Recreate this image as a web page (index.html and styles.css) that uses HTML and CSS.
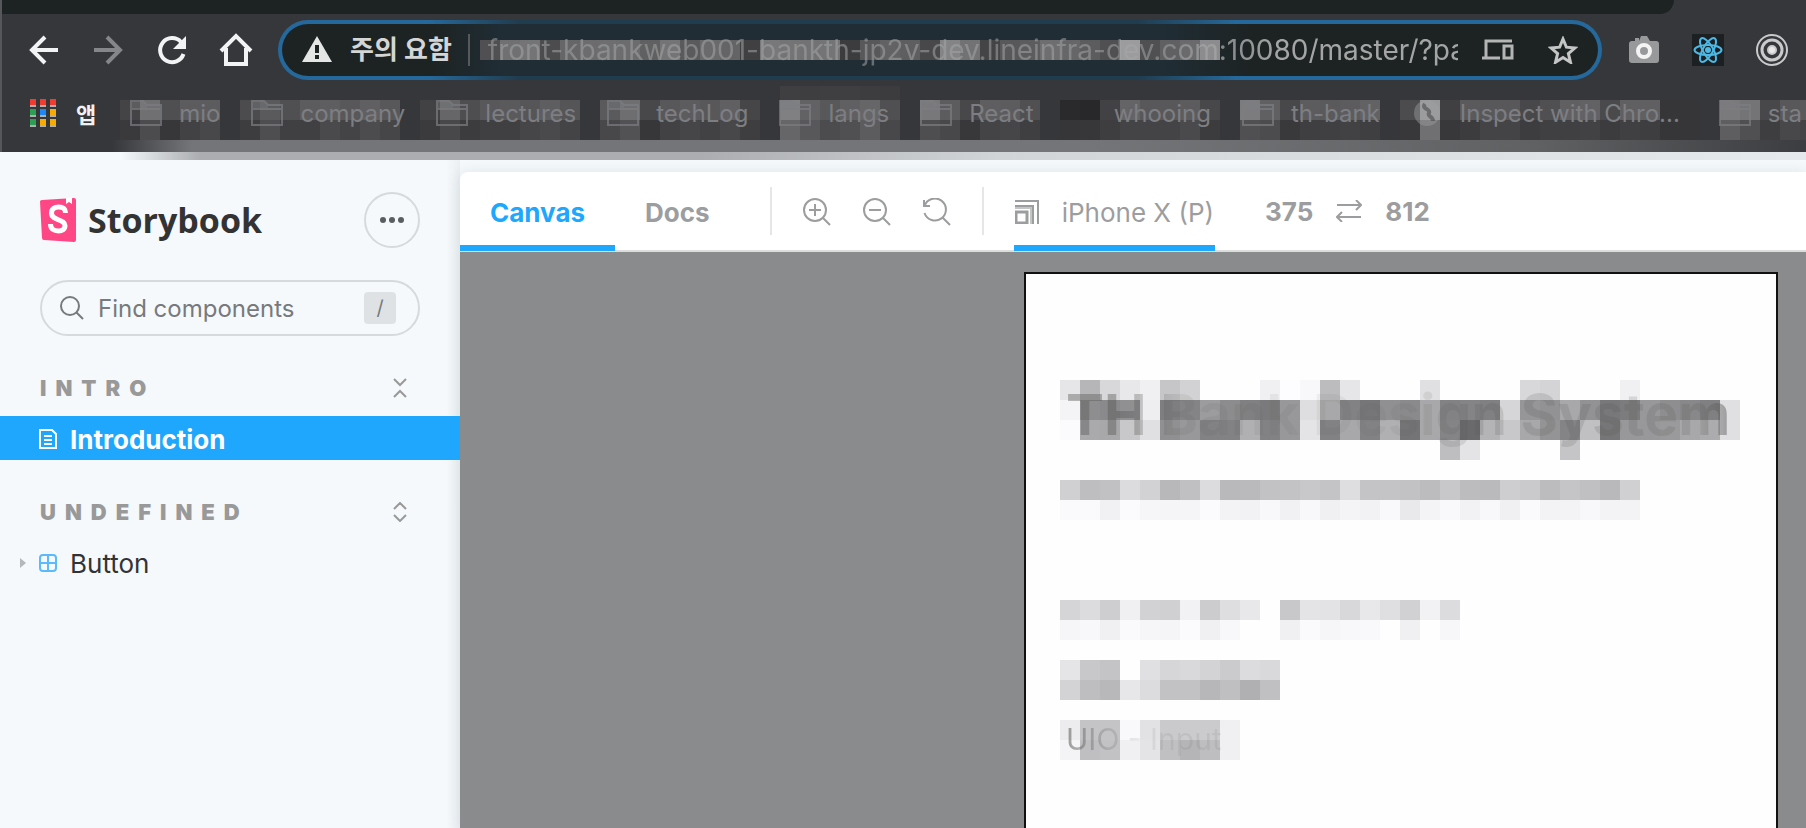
FILE: index.html
```html
<!DOCTYPE html>
<html lang="ko">
<head>
<meta charset="utf-8">
<title>Storybook</title>
<link rel="stylesheet" href="styles.css">
</head>
<body>
<svg class="defs" aria-hidden="true">
  <symbol id="folder" viewBox="0 0 32 26"><path d="M1 25V1h12l4 4h14v20zM1 9h30" fill="none" stroke="currentColor" stroke-width="2"/><path d="M1 1h12l4 4v4H1z" fill="currentColor" opacity=".6"/></symbol>
</svg>
<header class="browser">
  <div class="tabstrip"></div>
  <div class="navbar">
    <button class="nav" aria-label="Back"><svg width="32" height="32" viewBox="0 0 32 32" fill="none" stroke="#f2f3f4" stroke-width="4"><path d="M30 16H5M17 3L4 16l13 13"/></svg></button>
    <button class="nav" aria-label="Forward"><svg width="32" height="32" viewBox="0 0 32 32" fill="none" stroke="#85868a" stroke-width="4"><path d="M2 16h25M15 3l13 13-13 13"/></svg></button>
    <button class="nav" aria-label="Reload"><svg width="32" height="32" viewBox="0 0 32 32" fill="none" stroke="#f2f3f4" stroke-width="4"><path d="M27.500 20A12 12 0 1 1 25 8"/><path d="M30 2v13H17z" fill="#f2f3f4" stroke="none"/></svg></button>
    <button class="nav" aria-label="Home"><svg width="34" height="34" viewBox="0 0 34 34" fill="none" stroke="#f2f3f4" stroke-width="4"><path d="M2 18L17 3l15 15M7 15v16h20V15"/></svg></button>
    <div class="omnibox">
      <svg class="url-mosaic" data-rows="50 70 74 4c 66 6c 6e 6c 60 74 5a 6a 64 40 78 74 72 74 3c 58 62 5e 48 84 72 44 58 5c 6e 66 5c 50 9c 50 60 6a 8c"></svg>
      <svg class="warn" width="30" height="26" viewBox="0 0 30 26"><path d="M15 0l15 26H0z" fill="#e4e6e6"/><path d="M15 9v8M15 19v4" stroke="#1d2323" stroke-width="4"/></svg>
      <span class="secure">주의 요함</span>
      <input class="url" aria-label="URL" value="front-kbankweb001-bankth-jp2v-dev.lineinfra-dev.com:10080/master/?path">
      <svg width="32" height="22" viewBox="0 0 32 22" fill="none" stroke="#b4b6b6" stroke-width="3"><path d="M4 18V2h26M0 19h18M22 7h8v12h-8z"/></svg>
      <svg class="star" width="30" height="28" viewBox="0 0 30 28" fill="none" stroke="#c4c6c6" stroke-width="3"><path d="M15 3l3.400 8.200 8.600.7-6.600 5.700 2.100 8.700L15 21.600l-7.500 4.700 2.100-8.700L3 11.900l8.600-.7z"/></svg>
    </div>
    <button class="ext" aria-label="Capture"><svg width="32" height="28" viewBox="0 0 32 28"><path d="M4 5h3V2h4v3l2-5h6l3 5h6a3 3 0 0 1 3 3v16a3 3 0 0 1-3 3H4a3 3 0 0 1-3-3V8a3 3 0 0 1 3-3z" fill="#98999b"/><circle cx="16" cy="15" r="6" fill="#98999b" stroke="#f4f4f4" stroke-width="4"/></svg></button>
    <button class="ext" aria-label="React"><svg width="32" height="32" viewBox="0 0 32 32"><path d="M0 0h32v32H0z" fill="#1d2022"/><g fill="none" stroke="#4db9e6" stroke-width="2"><ellipse cx="16" cy="16" rx="13.500" ry="5"/><ellipse cx="16" cy="16" rx="13.500" ry="5" transform="rotate(60 16 16)"/><ellipse cx="16" cy="16" rx="13.500" ry="5" transform="rotate(120 16 16)"/></g><circle cx="16" cy="16" r="3" fill="#4db9e6"/></svg></button>
    <button class="ext" aria-label="Record"><svg width="32" height="32" viewBox="0 0 32 32" fill="none" stroke="#c9cacb" stroke-width="2"><circle cx="16" cy="16" r="15"/><circle cx="16" cy="16" r="10" stroke-width="3"/><circle cx="16" cy="16" r="4" fill="#e8e8e8"/></svg></button>
  </div>
  <nav class="bookmarks">
    <svg class="bm-mosaic" data-rows=".................................................................. 3f 3e 3f 3f 3d 3c/44 70 4f 5c 5c .. 4c 5a 50 5c 5e 58 60 58 .. 42 66 4e 58 5a 56 5e 55 .. 5a 6e 48 58 5c 58 60 46 .. 80 62 58 60 66 50 .. 78 5c 48 5e 5c 50 .. 2a 28 42 64 58 58 5c 48 .. 7c 60 48 5c 5a 5c 62 .. 4c 98 40 5a 58 58 48 50 60 62 4a 60 60 36 36 .. 7a 74 48 58 5a/3a 4c 37 42 48 .. 3d 4e 40 40 4a 44 4c 46 .. 3b 48 3c 40 40 46 4a 44 .. 48 52 37 42 46 42 48 3e .. 66 58 4c 50 5c 48 .. 4e 48 38 44 46 3f .. 36 37 3e 44 44 44 4a 3c .. 50 4c 39 3f 40 42 3f .. 38 70 38 3c 44 44 3d 40 40 42 3c 40 3e 36 36 .. 5e 50 3e 48 44"></svg>
    <a class="bm apps" href="#"><svg width="26" height="28" viewBox="0 0 26 28"><g fill="#aeb0b1"><path d="M0 6h6v2H0zM10 6h6v2h-6zM20 6h6v2h-6zM0 16h6v2H0zM10 16h6v2h-6zM20 16h6v2h-6zM0 26h6v2H0zM10 26h6v2h-6zM20 26h6v2h-6z"/></g><path d="M0 0h6v6H0zM10 0h6v6h-6zM20 0h6v6h-6z" fill="#f23b30"/><path d="M0 10h6v6H0zM0 20h6v6H0z" fill="#2f9e55"/><path d="M10 10h6v6h-6z" fill="#1e86f5"/><path d="M20 10h6v6h-6zM10 20h6v6h-6zM20 20h6v6h-6z" fill="#f7ab05"/></svg><b>앱</b></a>
    <a class="bm" href="#"><svg width="32" height="26"><use href="#folder"/></svg>mio</a>
    <a class="bm" href="#"><svg width="32" height="26"><use href="#folder"/></svg>company</a>
    <a class="bm" href="#"><svg width="32" height="26"><use href="#folder"/></svg>lectures</a>
    <a class="bm" href="#"><svg width="32" height="26"><use href="#folder"/></svg>techLog</a>
    <a class="bm" href="#"><svg width="32" height="26"><use href="#folder"/></svg>langs</a>
    <a class="bm" href="#"><svg width="32" height="26"><use href="#folder"/></svg>React</a>
    <a class="bm" href="#"><svg width="32" height="26"></svg>whooing</a>
    <a class="bm" href="#"><svg width="32" height="26"><use href="#folder"/></svg>th-bank</a>
    <a class="bm" href="#"><svg width="32" height="26" viewBox="0 0 32 26"><circle cx="16" cy="13" r="13" fill="#a0a1a3" opacity=".6"/><path d="M14 4c-4 5 6 5 4 9s4 3 4 8" fill="none" stroke="#58595c" stroke-width="4"/></svg>Inspect with Chro...</a>
    <a class="bm last" href="#"><svg width="32" height="26"><use href="#folder"/></svg>sta</a>
  </nav>
  <div class="edge"></div>
</header>
<div class="app">
  <aside class="sidebar">
    <div class="brand">
      <svg width="36" height="44" viewBox="0 0 36 44"><path d="M0 3.500Q0 2 2 2L34 0q2 0 2 2v40q0 2-2 2L4 42q-2 0-2-2z" fill="#ff4785"/><path d="M26 0h6v6l-3-2-3 2z" fill="#fff"/><path d="M25.500 15c0-5-3-6-7-6s-7 2-7 6c0 8 13.500 6 13.500 12.500 0 4-3 5.500-6.500 5.500-4.500 0-8-2-8-7" fill="none" stroke="#fff" stroke-width="5"/></svg>
      <span class="wordmark">Storybook</span>
      <button class="more" aria-label="Shortcuts"><svg width="24" height="8" viewBox="0 0 24 8" fill="#5b5e60"><circle cx="3" cy="4" r="3"/><circle cx="12" cy="4" r="3"/><circle cx="21" cy="4" r="3"/></svg></button>
    </div>
    <label class="search">
      <svg width="24" height="24" viewBox="0 0 24 24" fill="none" stroke="#777a7c" stroke-width="2"><circle cx="10" cy="10" r="9"/><path d="M16.500 16.500L23 23"/></svg>
      <input placeholder="Find components" aria-label="Find components">
      <kbd>/</kbd>
    </label>
    <section class="group">
      <h2>INTRO<button aria-label="Collapse"><svg width="14" height="20" viewBox="0 0 14 20" fill="none" stroke="#999" stroke-width="2"><path d="M1 1l6 6 6-6M1 19l6-6 6 6"/></svg></button></h2>
      <a class="item active" href="#"><svg width="18" height="20" viewBox="0 0 18 20" fill="none" stroke="#fff" stroke-width="2"><path d="M1 1h12l4 4v14H1zM5 7h8M5 11h8M5 15h8"/></svg>Introduction</a>
    </section>
    <section class="group">
      <h2>UNDEFINED<button aria-label="Expand"><svg width="14" height="20" viewBox="0 0 14 20" fill="none" stroke="#999" stroke-width="2"><path d="M1 7l6-6 6 6M1 13l6 6 6-6"/></svg></button></h2>
      <a class="item" href="#"><svg class="caret" width="6" height="10" viewBox="0 0 6 10"><path d="M0 0l6 5-6 5z" fill="#b5b8ba"/></svg><svg width="18" height="18" viewBox="0 0 18 18" fill="none" stroke="#5cb9fc" stroke-width="2"><rect x="1" y="1" width="16" height="16" rx="3"/><path d="M9 1v16M1 9h16"/></svg>Button</a>
    </section>
  </aside>
  <main class="panel">
    <div class="toolbar">
      <button class="tab on">Canvas</button>
      <button class="tab docs">Docs</button>
      <span class="rule"></span>
      <div class="zooms">
        <button aria-label="Zoom in"><svg width="28" height="28" viewBox="0 0 28 28"><circle cx="12" cy="12" r="11"/><path d="M20 20l7 7M6 12h12M12 6v12"/></svg></button>
        <button aria-label="Zoom out"><svg width="28" height="28" viewBox="0 0 28 28"><circle cx="12" cy="12" r="11"/><path d="M20 20l7 7M6 12h12"/></svg></button>
        <button aria-label="Reset zoom"><svg width="28" height="28" viewBox="0 0 28 28"><path d="M20 20l7 7M1 2v6h6M1.500 8A11 11 0 1 1 1.500 15"/></svg></button>
      </div>
      <span class="rule"></span>
      <button class="device"><svg width="24" height="24" viewBox="0 0 24 24" fill="none" stroke="#9c9d9e" stroke-width="2"><path d="M0 1h23v23M0 6h18v18" /><path d="M0 8h16v16" stroke="#c4c5c6"/><rect x="1" y="12" width="11" height="11" stroke-width="3"/></svg>iPhone X (P)</button>
      <div class="size"><span>375</span><button aria-label="Rotate"><svg width="26" height="22" viewBox="0 0 26 22"><path d="M1 5h24M20 0l5 5-5 5M25 17H1M6 12l-5 5 5 5"/></svg></button><span>812</span></div>
    </div>
    <div class="canvas">
      <article class="frame">
        <div class="block title"><svg data-rows="e6 b6 d8 e8 f0 c6 d2 .. .. .. f0 fd f8 bc e6 .. .. .. e0 .. .. .. .. d8 d4 .. .. .. f0 .. .. .. .. ../f4 8e 8a 90 ee 7e 84 9c 8c 80 7a 98 de a8 82 76 90 8a a8 82 84 80 d6 96 92 a8 92 78 7c 98 8e 88 80 e0/fb aa a8 c8 e0 90 98 82 82 b0 82 98 e4 82 a8 82 b0 74 a8 84 6a b4 c8 a8 94 84 c0 76 98 98 9a a8 ac e0/.. .. .. .. .. .. .. .. .. .. .. .. .. .. .. .. .. .. .. be e4 .. .. .. .. c5 .. .. .. .. .. .. .. .."></svg><h1>TH Bank Design System</h1></div>
        <div class="block lead"><svg data-rows="d0 be c1 dc d2 b8 c0 dc b9 ba c2 c3 c8 c4 de c4 c4 c2 bc c8 bc ba ce ca bc c5 c0 b9 d0/fa fa f1 fb f6 f5 f5 fb f3 f2 f8 f1 f8 f0 f4 f2 f9 e9 f4 f9 f2 f8 f0 fa f3 f3 f8 f3 f3"></svg></div>
        <div class="block"><svg data-rows="d5 dc ce f0 d2 d0 f2 cc de e8 .. c8 e4 e3 d8 e8 df d1 f2 dc/f6 f8 f0 fa f6 f5 fb f0 f8 .. .. f0 fa f6 f8 f9 .. f0 .. f7"></svg></div>
        <div class="block"><svg data-rows="e5 c8 c4 .. e0 d6 d9 d3 cb dc d9/d3 be b8 e7 dc c2 c2 b7 bf b0 c0"></svg></div>
        <div class="block"><svg data-rows="ec c4 c4 f9 e2 ca cb cb f0/f4 bf c2 f0 e4 c0 b5 be f0"></svg><p>UIO - Input</p></div>
      </article>
    </div>
  </main>
</div>
<script src="mosaic.js"></script>
</body>
</html>
```
FILE: mosaic.js
```js
// Paints each svg[data-rows] as 20px tiles; rows are split by "/", tiles are grey levels in hex.
const TILE = 20;
document.querySelectorAll('svg[data-rows]').forEach(svg => {
  const rows = svg.dataset.rows.split('/').map(r => r.replace(/\s/g, '').match(/../g));
  svg.setAttribute('width', Math.max(...rows.map(r => r.length)) * TILE);
  svg.setAttribute('height', rows.length * TILE);
  svg.setAttribute('shape-rendering', 'crispEdges');
  rows.forEach((row, y) => row.forEach((level, x) => {
    if (level === '..') return;
    const tile = document.createElementNS('http://www.w3.org/2000/svg', 'rect');
    const g = parseInt(level, 16);
    tile.setAttribute('x', x * TILE);
    tile.setAttribute('y', y * TILE);
    tile.setAttribute('width', TILE);
    tile.setAttribute('height', TILE);
    tile.setAttribute('fill', `rgb(${g},${g},${Math.min(g + 2, 255)})`);
    svg.append(tile);
  }));
});
```
FILE: styles.css
```css
* { box-sizing: border-box; }
body {
  margin: 0;
  height: 100vh;
  display: flex;
  flex-direction: column;
  overflow: hidden;
  background: #f5f9fc;
  color: #333;
  font-family: Inter, "Noto Sans CJK KR", sans-serif;
  font-size: 26px;
}
button, input { font: inherit; color: inherit; border: 0; padding: 0; margin: 0; background: none; }
button { display: flex; align-items: center; justify-content: center; }
input { outline: 0; min-width: 0; }
svg { display: block; flex: none; }
a { color: inherit; text-decoration: none; }
.defs { position: absolute; width: 0; height: 0; }

.browser { background: #36373b; border-left: 2px solid #55575a; flex: none; }
.tabstrip { height: 14px; margin-right: 132px; background: #1d2323; border-radius: 0 0 14px 0; }
.navbar { height: 72px; padding: 0 18px 0 26px; display: flex; align-items: center; gap: 32px; }
.nav { width: 32px; height: 32px; }
.omnibox {
  flex: 1;
  min-width: 0;
  height: 60px;
  margin: 0 -6px 0 -6px;
  padding: 0 20px 0 20px;
  display: flex;
  align-items: center;
  position: relative;
  border: 4px solid transparent;
  border-radius: 30px;
  background:
    linear-gradient(90deg, #1d2323 150px, #202d35 220px, #202d35 880px, #1d2323 970px) padding-box,
    linear-gradient(90deg, #25699c 150px, #203d50 240px, #203d50 860px, #25699c 960px) border-box;
}
.url-mosaic { position: absolute; left: 198px; top: 16px; }
.secure { margin-left: 18px; padding-right: 16px; border-right: 2px solid #55595a; font-size: 26px; font-weight: 700; line-height: 32px; color: #d4d6d6; white-space: nowrap; }
.url {
  flex: 1;
  position: relative;
  margin: 0 24px 0 18px;
  color: #a4a6a6;
  font-size: 28px;
  -webkit-mask-image: linear-gradient(90deg, #0008 680px, #000 790px);
  mask-image: linear-gradient(90deg, #0008 680px, #000 790px);
}
.warn { margin-top: -2px; }
.star { margin-left: 34px; }
.ext { width: 32px; height: 32px; }

.bookmarks { height: 54px; padding: 14px 0 14px 28px; display: flex; gap: 31px; position: relative; overflow: hidden; }
.bm-mosaic { position: absolute; left: 118px; top: 0; margin-top: -6px; }
.bm { display: flex; align-items: center; gap: 17px; position: relative; height: 26px; font-size: 24px; white-space: nowrap; color: #7d7e82; }
.bm svg { opacity: .7; }
.bm.apps { gap: 20px; color: #f0f1f2; font-size: 22px; margin-right: 3px; }
.bm.apps svg { opacity: 1; }
.bm.last { margin-left: 8px; }
.edge { height: 12px; background: linear-gradient(90deg, #77797c00 110px, #737578 190px, #737578 60%, #5f6163 85%, #3c3d40 100%); }

.app { flex: 1; min-height: 0; display: flex; }
.app::before { content: ""; position: absolute; left: 0; right: 0; height: 8px; background: linear-gradient(90deg, #b0b2b400 120px, #abadb0 200px, #abadb0 700px, #d2d5d7 1000px, #e6e9eb 100%); }
.sidebar { width: 460px; flex: none; padding-top: 40px; background: linear-gradient(90deg, #f5f9fc 446px, #ebeff2); }
.brand { height: 56px; padding: 0 40px; display: flex; align-items: center; gap: 12px; }
.wordmark { flex: 1; font-family: "Open Sans", sans-serif; font-weight: 700; font-size: 34px; line-height: 44px; }
.more { width: 56px; height: 56px; border: 2px solid #d6dadc; border-radius: 50%; }
.search { height: 56px; margin: 32px 40px 0; padding: 0 22px 0 18px; border: 2px solid #d6dadc; border-radius: 28px; display: flex; align-items: center; gap: 14px; font-size: 24px; }
.search input { flex: 1; }
.search input::placeholder { color: #777a7c; opacity: 1; }
kbd { width: 32px; height: 32px; border-radius: 4px; background: #dfe2e5; color: #777a7c; font-family: inherit; font-size: 20px; line-height: 32px; text-align: center; }
.group { margin-top: 36px; }
.group h2 { margin: 0; padding: 0 53px 12px 40px; height: 44px; display: flex; align-items: center; justify-content: space-between; color: #999; font-size: 22px; line-height: 32px; font-weight: 900; letter-spacing: 9px; }
.item { height: 44px; padding: 2px 0 0 39px; display: flex; align-items: center; gap: 13px; position: relative; }
.item.active { background: #1ea7fd; color: #fff; font-weight: 700; }
.caret { position: absolute; left: 20px; }

.panel { flex: 1; min-width: 0; margin-top: 20px; display: flex; flex-direction: column; background: #fff; border-radius: 8px 0 0 0; box-shadow: 0 0 14px #2030401a; overflow: hidden; }
.toolbar { height: 80px; flex: none; display: flex; align-items: center; border-bottom: 2px solid #dcdede; color: #9c9d9e; }
.toolbar svg { fill: none; stroke: #9c9d9e; stroke-width: 2; }
.tab { height: 80px; padding: 8px 30px 0; font-weight: 700; border-bottom: 6px solid transparent; }
.tab.on { color: #1ea7fd; border-color: #1ea7fd; }
.docs { margin-right: 30px; }
.rule { width: 2px; height: 48px; background: #e4e6e7; }
.zooms { display: flex; gap: 32px; margin: 0 31px; padding-top: 2px; }
.device { height: 80px; margin-left: 30px; padding: 8px 1px 0; gap: 23px; border-bottom: 6px solid #1ea7fd; }
.size { display: flex; align-items: center; gap: 23px; margin-left: 50px; font-weight: 700; }
.canvas { flex: 1; min-height: 0; background: #8a8b8c; padding: 20px 28px 0 0; display: flex; }
.frame { width: 754px; height: 1000px; margin-left: auto; padding: 106px 32px 0 34px; border: 2px solid #111; background: #fefefe; color: #555; }
.block { display: grid; margin-bottom: 20px; }
.block > * { grid-area: 1 / 1; }
.block h1, .block p { margin: 0; padding-left: 6px; white-space: nowrap; }
.block h1 {
  font-size: 57px;
  line-height: 70px;
  font-weight: 700;
  opacity: .5;
  -webkit-mask-image: linear-gradient(90deg, #000c 60px, #0003 120px, #0002 320px, #0005 420px, #0005 640px, #000 670px);
  mask-image: linear-gradient(90deg, #000c 60px, #0003 120px, #0002 320px, #0005 420px, #0005 640px, #000 670px);
}
.block p {
  font-size: 30px;
  line-height: 38px;
  opacity: .7;
  -webkit-mask-image: linear-gradient(90deg, #000b 10px, #0004 50px, #0002 80px);
  mask-image: linear-gradient(90deg, #000b 10px, #0004 50px, #0002 80px);
}
.lead { margin-bottom: 80px; }
```
